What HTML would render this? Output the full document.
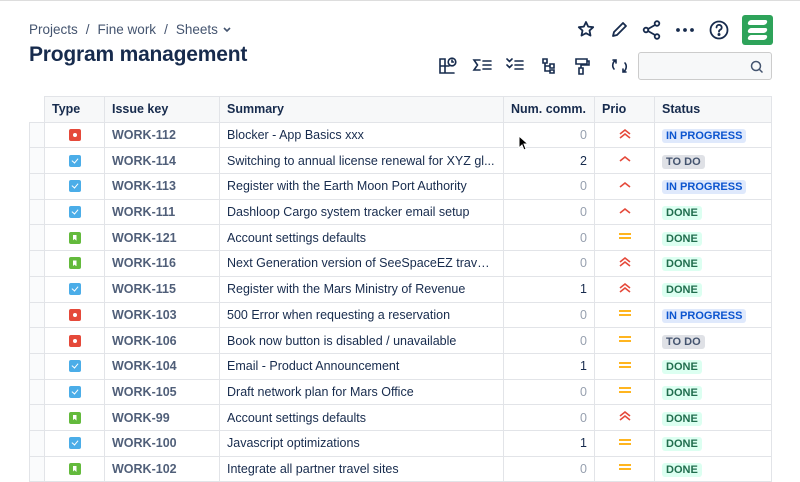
<!DOCTYPE html>
<html><head><style>
*{box-sizing:border-box;margin:0;padding:0}
body{width:800px;height:482px;overflow:hidden;background:#fff;font-family:"Liberation Sans",sans-serif;color:#172b4d;position:relative;border-top:1px solid #ddd}
.bc{position:absolute;left:29px;top:21px;font-size:13.5px;color:#44546f}
.bc span{margin:0 8px}
h1{position:absolute;left:29px;top:42px;font-size:21px;font-weight:bold;color:#172b4d;letter-spacing:-0.2px}
.ic{position:absolute}
.logo{position:absolute;left:742px;top:14px;width:31px;height:30px;background:#2ea35a;border-radius:3px}
.logo i{position:absolute;left:6px;width:19px;height:5px;background:#fff;border-radius:3px;transform:skewX(-20deg)}
.search{position:absolute;left:638px;top:51px;width:134px;height:28px;border:1px solid #ccc;border-radius:3px;background:#f7f8f9}
table{position:absolute;left:29px;top:95px;border-collapse:collapse;font-size:12.5px;table-layout:fixed;width:742px}
tr{height:25.7px}
td,th{border:1px solid #e2e4e8;padding:0 7px;white-space:nowrap;overflow:hidden;text-overflow:ellipsis}
th{background:#f7f8f9;text-align:left;font-weight:bold;color:#172b4d}
td.g{padding:0;border-left:1px solid #e2e4e8;background:#fafbfc}
th.g{background:#fff;border:none;border-bottom:1px solid #e2e4e8}
.key{color:#505f79;font-weight:bold}
.n{text-align:right;color:#97a0af}.n.b{color:#172b4d}
.t{display:block;margin:auto;width:12px;height:12px;border-radius:2px;position:relative}
.bug{background:#e5493a}.bug:after{content:"";position:absolute;left:4px;top:4px;width:4px;height:4px;border-radius:50%;background:#fff}
.task{background:#4bade8}.task:after{content:"";position:absolute;left:4px;top:2px;width:3px;height:5px;border:solid #fff;border-width:0 1.5px 1.5px 0;transform:rotate(40deg)}
.story{background:#63ba3c}.story:after{content:"";position:absolute;left:4px;top:3px;width:4px;height:6px;background:#fff;clip-path:polygon(0 0,100% 0,100% 100%,50% 70%,0 100%)}
.st{font-size:11px;font-weight:bold;padding:1px 4px;border-radius:3px}
.ip{background:#dfe9fc;color:#0c55cf}.td{background:#dfe1e6;color:#44546f}.dn{background:#dcfff1;color:#216e4e}
.p{text-align:center}
</style></head><body>
<div class="bc">Projects<span>/</span>Fine work<span>/</span>Sheets <svg width="10" height="8" viewBox="0 0 10 8"><path d="M2 2l3 3 3-3" stroke="#44546f" stroke-width="1.6" fill="none"/></svg></div>
<h1>Program management</h1>
<svg class="ic" style="left:577px;top:18px" width="200" height="24" viewBox="577 18 200 24" fill="none" stroke="#172b4d" stroke-width="1.8" stroke-linejoin="round" stroke-linecap="round">
<path d="M586 21l2.2 4.6 5 .6-3.7 3.4 1 5-4.5-2.5-4.5 2.5 1-5-3.7-3.4 5-.6z"/>
<path d="M613 35l1-4 9-9 3 3-9 9z"/>
<circle cx="646" cy="29" r="2.3"/><circle cx="657" cy="22.5" r="2.3"/><circle cx="657" cy="35.5" r="2.3"/><path d="M648 28l7-4M648 30l7 4"/>
<circle cx="678" cy="29" r="1" fill="#172b4d"/><circle cx="685" cy="29" r="1" fill="#172b4d"/><circle cx="692" cy="29" r="1" fill="#172b4d"/>
<circle cx="719" cy="29" r="8.5"/><path d="M716.5 26.5a2.6 2.6 0 1 1 3.5 2.4c-.8.4-1 1-1 1.8"/><circle cx="719" cy="33.5" r=".6" fill="#172b4d"/>
</svg>
<div class="logo"><i style="top:5px"></i><i style="top:12.5px"></i><i style="top:20px"></i></div>
<svg class="ic" style="left:436px;top:54px" width="196" height="22" viewBox="436 54 196 22" fill="none" stroke="#172b4d" stroke-width="1.6" stroke-linecap="round">
<path d="M440 58h5v14h-5zM440 65h9M445 72h9"/><circle cx="452" cy="61" r="3.8"/><path d="M452 59v2h1.5"/>
<path d="M480 59h-6l3.5 5-3.5 5h6M483 60h8M483 64h8M483 68h8"/>
<path d="M507 58l2.5 2.5 2.5-2.5M507 64l2.5 2.5 2.5-2.5M515 60h8M515 64h8M515 68h8"/>
<path d="M543 58h4v4h-4zM545 62v8h5M545 65h5M550 63h4v4h-4zM550 69h4v3h-4z"/>
<path d="M576 58h11v5h-11zM587 60h2v4h-8v3M579 67h4v6h-4z"/>
<path d="M616 59a6 6 0 0 0-2 9M613 59h3v3M623 71a6 6 0 0 0 2-9M626 71h-3v-3"/>
</svg>
<div class="search"><svg style="position:absolute;right:7px;top:7px" width="14" height="14" viewBox="0 0 14 14" fill="none" stroke="#44546f" stroke-width="1.5"><circle cx="6" cy="6" r="4.5"/><path d="M9.5 9.5l3 3"/></svg></div>
<table>
<colgroup><col style="width:15px"><col style="width:60px"><col style="width:115px"><col style="width:284px"><col style="width:91px"><col style="width:60px"><col style="width:117px"></colgroup>
<tr><th class="g"></th><th>Type</th><th>Issue key</th><th>Summary</th><th>Num. comm.</th><th>Prio</th><th>Status</th></tr>
<tr><td class="g"></td><td><i class="t bug"></i></td><td class="key">WORK-112</td><td>Blocker - App Basics xxx</td><td class="n">0</td><td class="p"><svg width="14" height="12"><path d="M2 6l5-4 5 4M2 10l5-4 5 4" stroke="#e5493a" stroke-width="1.6" fill="none"/></svg></td><td><span class="st ip">IN PROGRESS</span></td></tr>
<tr><td class="g"></td><td><i class="t task"></i></td><td class="key">WORK-114</td><td>Switching to annual license renewal for XYZ gl...</td><td class="n b">2</td><td class="p"><svg width="14" height="12"><path d="M2 8l5-4 5 4" stroke="#e5493a" stroke-width="1.6" fill="none"/></svg></td><td><span class="st td">TO DO</span></td></tr>
<tr><td class="g"></td><td><i class="t task"></i></td><td class="key">WORK-113</td><td>Register with the Earth Moon Port Authority</td><td class="n">0</td><td class="p"><svg width="14" height="12"><path d="M2 8l5-4 5 4" stroke="#e5493a" stroke-width="1.6" fill="none"/></svg></td><td><span class="st ip">IN PROGRESS</span></td></tr>
<tr><td class="g"></td><td><i class="t task"></i></td><td class="key">WORK-111</td><td>Dashloop Cargo system tracker email setup</td><td class="n">0</td><td class="p"><svg width="14" height="12"><path d="M2 8l5-4 5 4" stroke="#e5493a" stroke-width="1.6" fill="none"/></svg></td><td><span class="st dn">DONE</span></td></tr>
<tr><td class="g"></td><td><i class="t story"></i></td><td class="key">WORK-121</td><td>Account settings defaults</td><td class="n">0</td><td class="p"><svg width="14" height="12"><path d="M1 4h12M1 8h12" stroke="#ffab00" stroke-width="1.8"/></svg></td><td><span class="st dn">DONE</span></td></tr>
<tr><td class="g"></td><td><i class="t story"></i></td><td class="key">WORK-116</td><td>Next Generation version of SeeSpaceEZ travel...</td><td class="n">0</td><td class="p"><svg width="14" height="12"><path d="M2 6l5-4 5 4M2 10l5-4 5 4" stroke="#e5493a" stroke-width="1.6" fill="none"/></svg></td><td><span class="st dn">DONE</span></td></tr>
<tr><td class="g"></td><td><i class="t task"></i></td><td class="key">WORK-115</td><td>Register with the Mars Ministry of Revenue</td><td class="n b">1</td><td class="p"><svg width="14" height="12"><path d="M2 6l5-4 5 4M2 10l5-4 5 4" stroke="#e5493a" stroke-width="1.6" fill="none"/></svg></td><td><span class="st dn">DONE</span></td></tr>
<tr><td class="g"></td><td><i class="t bug"></i></td><td class="key">WORK-103</td><td>500 Error when requesting a reservation</td><td class="n">0</td><td class="p"><svg width="14" height="12"><path d="M1 4h12M1 8h12" stroke="#ffab00" stroke-width="1.8"/></svg></td><td><span class="st ip">IN PROGRESS</span></td></tr>
<tr><td class="g"></td><td><i class="t bug"></i></td><td class="key">WORK-106</td><td>Book now button is disabled / unavailable</td><td class="n">0</td><td class="p"><svg width="14" height="12"><path d="M1 4h12M1 8h12" stroke="#ffab00" stroke-width="1.8"/></svg></td><td><span class="st td">TO DO</span></td></tr>
<tr><td class="g"></td><td><i class="t task"></i></td><td class="key">WORK-104</td><td>Email - Product Announcement</td><td class="n b">1</td><td class="p"><svg width="14" height="12"><path d="M1 4h12M1 8h12" stroke="#ffab00" stroke-width="1.8"/></svg></td><td><span class="st dn">DONE</span></td></tr>
<tr><td class="g"></td><td><i class="t task"></i></td><td class="key">WORK-105</td><td>Draft network plan for Mars Office</td><td class="n">0</td><td class="p"><svg width="14" height="12"><path d="M1 4h12M1 8h12" stroke="#ffab00" stroke-width="1.8"/></svg></td><td><span class="st dn">DONE</span></td></tr>
<tr><td class="g"></td><td><i class="t story"></i></td><td class="key">WORK-99</td><td>Account settings defaults</td><td class="n">0</td><td class="p"><svg width="14" height="12"><path d="M2 6l5-4 5 4M2 10l5-4 5 4" stroke="#e5493a" stroke-width="1.6" fill="none"/></svg></td><td><span class="st dn">DONE</span></td></tr>
<tr><td class="g"></td><td><i class="t task"></i></td><td class="key">WORK-100</td><td>Javascript optimizations</td><td class="n b">1</td><td class="p"><svg width="14" height="12"><path d="M1 4h12M1 8h12" stroke="#ffab00" stroke-width="1.8"/></svg></td><td><span class="st dn">DONE</span></td></tr>
<tr><td class="g"></td><td><i class="t story"></i></td><td class="key">WORK-102</td><td>Integrate all partner travel sites</td><td class="n">0</td><td class="p"><svg width="14" height="12"><path d="M1 4h12M1 8h12" stroke="#ffab00" stroke-width="1.8"/></svg></td><td><span class="st dn">DONE</span></td></tr>
</table>
<svg class="ic" style="left:518px;top:134px" width="12" height="16"><path d="M1 1v12l3-3 2 5 2-1-2-5h4z" fill="#000" stroke="#fff" stroke-width="1"/></svg>
</body></html>
